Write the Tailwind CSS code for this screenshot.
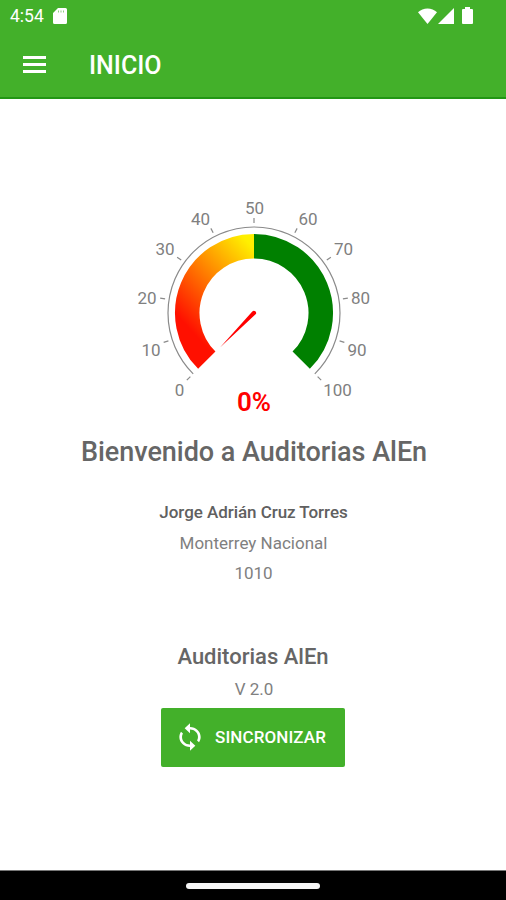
<!DOCTYPE html>
<html lang="es">

<head>
    <meta charset="UTF-8">
    <meta name="viewport" content="width=device-width, initial-scale=1.0">
    <script src="https://cdn.jsdelivr.net/npm/@tailwindcss/browser@4"></script>
    <title>Auditorias AlEn</title>
</head>

<body class="bg-white">
    <div class="h-screen flex flex-col overflow-hidden font-['Roboto',sans-serif] text-[#666666]">
        <header class="h-[99px] shrink-0 bg-[#43b02a] border-b-2 border-[#229614] text-white">
            <!-- status bar -->
            <div class="h-[31px] flex items-center justify-between pl-[10px] pr-[33px]">
                <div class="flex items-center gap-[9px]">
                    <span class="text-[17.5px] leading-8">4:54</span>
                    <svg class="w-[14px] h-4" viewBox="0 0 14 16" fill="currentColor">
                        <path d="M5 0h7.500a1.500 1.500 0 0 1 1.500 1.500v13a1.500 1.500 0 0 1-1.500 1.500h-11A1.500 1.500 0 0 1 0 14.500V5z" />
                        <path d="M5.500 2.500v2M8 2.500v2M10.500 2.500v2" stroke="#43b02a" stroke-width="1" opacity=".6" />
                    </svg>
                </div>
                <div class="flex items-center">
                    <svg class="w-[19px] h-4" viewBox="0 0 19 16" fill="currentColor">
                        <path d="M0 4.300C5-.9 14-.9 19 4.300L9.500 16z" />
                    </svg>
                    <svg class="w-4 h-4 ml-[1px]" viewBox="0 0 16 16" fill="currentColor">
                        <path d="M16 0v16H0z" />
                    </svg>
                    <svg class="w-[11px] h-[17px] ml-2" viewBox="0 0 11 17" fill="currentColor">
                        <path d="M3 0h5v2h2a1 1 0 0 1 1 1v13a1 1 0 0 1-1 1H1a1 1 0 0 1-1-1V3a1 1 0 0 1 1-1h2z" />
                    </svg>
                </div>
            </div>
            <!-- toolbar -->
            <div class="h-[66px] flex items-center pl-[23px]">
                <button type="button" class="w-[23px] flex flex-col gap-[4px]" aria-label="Menu">
                    <span class="h-[3px] bg-white"></span>
                    <span class="h-[3px] bg-white"></span>
                    <span class="h-[3px] bg-white"></span>
                </button>
                <h1 class="ml-[43px] pt-1 text-[25px] leading-8 font-medium">INICIO</h1>
            </div>
        </header>

        <main class="flex-1 flex flex-col items-center pl-[2px]">
            <!-- gauge -->
            <svg class="mt-[91px] w-[280px] h-[240px] shrink-0" viewBox="114 190 280 240">
                <defs>
                    <linearGradient id="heat" gradientUnits="userSpaceOnUse" x1="175" y1="313" x2="250" y2="244">
                        <stop offset="0" stop-color="#ff1000" />
                        <stop offset="1" stop-color="#fff000" />
                    </linearGradient>
                </defs>
                <path d="M193.200 373.800A86 86 0 1 1 314.800 373.800" fill="none" stroke="#8a8a8a" stroke-width="1.200" />
                <path d="M206.800 360.200A66.750 66.750 0 0 1 254 246.250" fill="none" stroke="url(#heat)" stroke-width="24.500" />
                <path d="M254 246.250A66.750 66.750 0 0 1 301.200 360.200" fill="none" stroke="#008000" stroke-width="24.500" />
                <g id="ticks" stroke="#8a8a8a" stroke-width="1.200"></g>
                <path d="M220 347.500L252.300 311.600A2 2 0 0 1 255.600 314.300z" fill="#ff0000" />
                <g font-size="17" fill="#808080" text-anchor="middle">
                    <text x="179.500" y="396">0</text>
                    <text x="151" y="356">10</text>
                    <text x="147" y="304">20</text>
                    <text x="165" y="255">30</text>
                    <text x="200.500" y="225">40</text>
                    <text x="254.500" y="214">50</text>
                    <text x="308" y="225">60</text>
                    <text x="343.500" y="255">70</text>
                    <text x="360.500" y="304">80</text>
                    <text x="357" y="356">90</text>
                    <text x="337.500" y="396">100</text>
                </g>
                <text x="254" y="411" font-size="26" font-weight="600" fill="#ff0000" text-anchor="middle">0%</text>
            </svg>

            <h2 class="mt-[6px] text-[27px] leading-8 font-medium tracking-[-0.03px] whitespace-nowrap">Bienvenido a Auditorias AlEn</h2>

            <div class="mt-[29px] mr-[1px] flex flex-col items-center text-[17px] leading-[30.500px]">
                <p class="font-medium text-[#606060] tracking-[-0.05px]">Jorge Adrián Cruz Torres</p>
                <p class="text-[#808080]">Monterrey Nacional</p>
                <p class="text-[#808080]">1010</p>
            </div>

            <h3 class="mt-[52px] mr-[2px] text-[22px] leading-8 font-medium">Auditorias AlEn</h3>
            <p class="mt-[1px] text-[17px] leading-[30px] text-[#808080]">V 2.0</p>

            <button type="button" class="mt-[4px] mr-[2px] w-[184px] h-[59px] shrink-0 flex items-center pl-[17px] rounded-xs bg-[#43b02a] text-white">
                <svg class="w-6 h-[30px]" viewBox="3 0 18 24" preserveAspectRatio="none" fill="currentColor">
                    <path d="M12 4V1L8 5l4 4V6c3.310 0 6 2.690 6 6 0 1.010-.25 1.970-.7 2.800l1.460 1.460C19.540 15.030 20 13.570 20 12c0-4.420-3.580-8-8-8zm0 14c-3.310 0-6-2.690-6-6 0-1.010.25-1.970.7-2.800L5.240 7.740C4.460 8.970 4 10.430 4 12c0 4.420 3.580 8 8 8v3l4-4-4-4v3z" />
                </svg>
                <span class="ml-[13px] pt-[2px] text-[17px] font-medium tracking-[0.1px]">SINCRONIZAR</span>
            </button>
        </main>

        <!-- navigation bar -->
        <footer class="h-[30px] shrink-0 bg-black border-t border-[#777777] flex justify-center pt-3">
            <div class="w-[134px] h-[6px] rounded-sm bg-[#f5f5f5]"></div>
        </footer>
    </div>

    <script>
        const ticks = document.querySelector('#ticks')

        // one tick every 27 degrees, from 0 (bottom left) to 100 (bottom right)
        for (let i = 0; i <= 10; i++) {
            const angle = (135 + i * 27) * Math.PI / 180
            const line = document.createElementNS('http://www.w3.org/2000/svg', 'line')
            line.setAttribute('x1', 254 + 90 * Math.cos(angle))
            line.setAttribute('y1', 313 + 90 * Math.sin(angle))
            line.setAttribute('x2', 254 + 95 * Math.cos(angle))
            line.setAttribute('y2', 313 + 95 * Math.sin(angle))
            ticks.appendChild(line)
        }
    </script>
</body>

</html>
